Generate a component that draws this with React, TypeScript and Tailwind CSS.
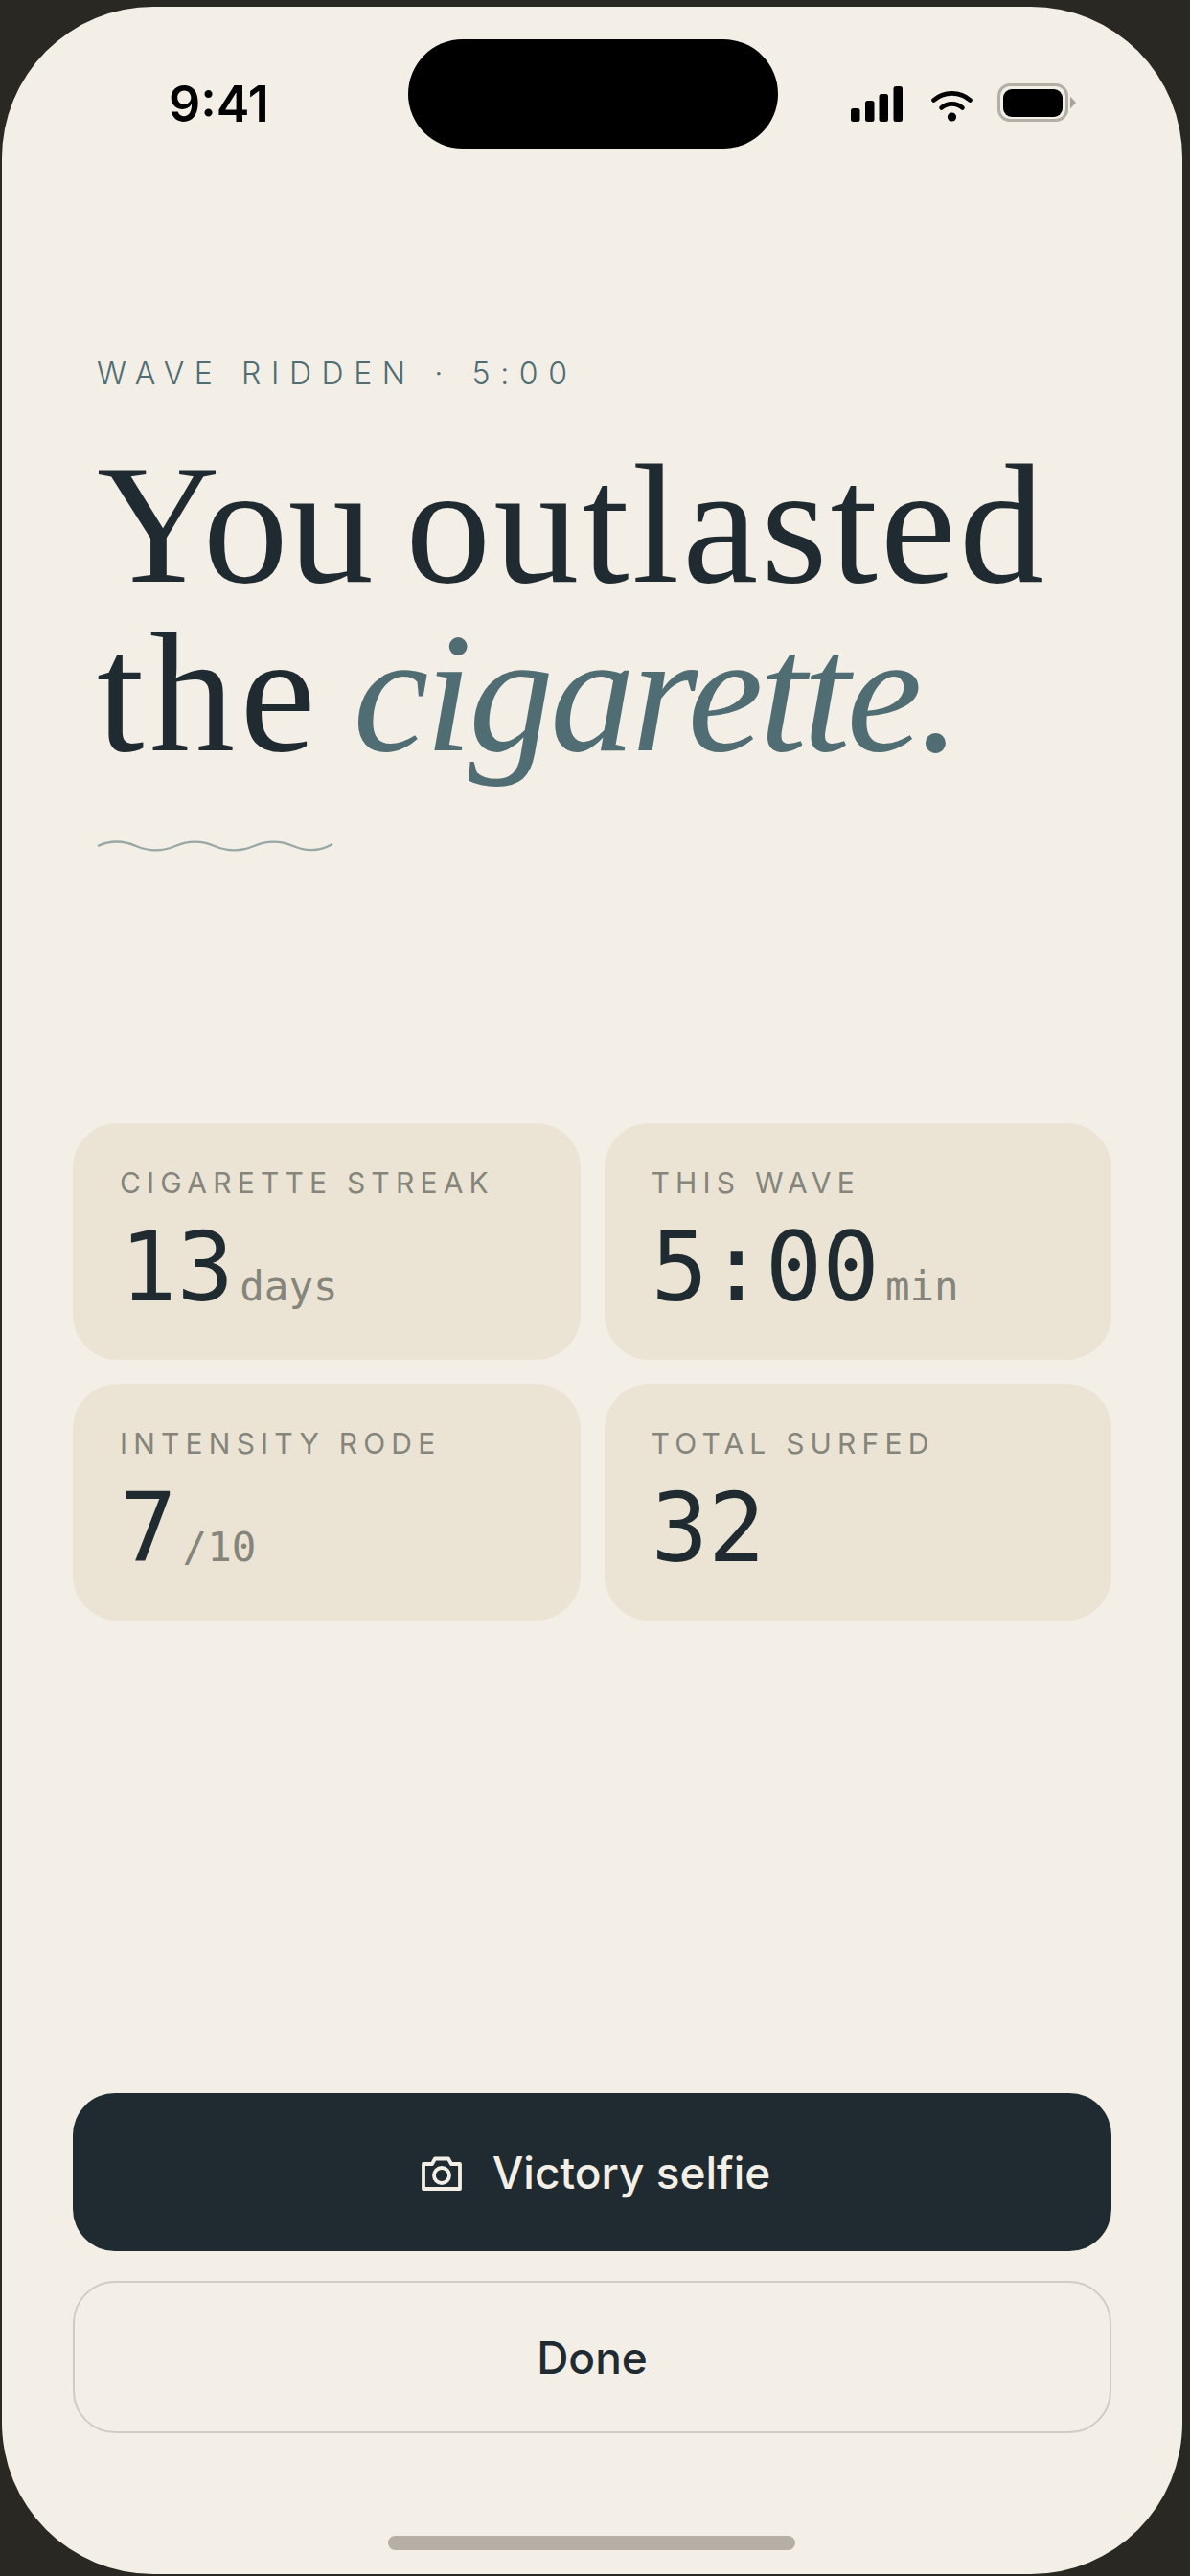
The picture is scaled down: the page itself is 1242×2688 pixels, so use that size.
const serif = "font-['Liberation_Serif',serif]"

function StatusIcons() {
  return (
    <div className="flex items-end">
      <svg width="54" height="37" viewBox="0 0 54 37" fill="#000">
        <rect x="0" y="23" width="9.5" height="14" rx="2.5" />
        <rect x="15" y="15" width="9.5" height="22" rx="2.5" />
        <rect x="29.5" y="8" width="9.5" height="29" rx="2.5" />
        <rect x="44.5" y="0" width="9.5" height="37" rx="2.5" />
      </svg>
      <svg className="ml-[30px]" width="43" height="33" viewBox="0 0 43 33" fill="none" stroke="#000" strokeWidth="4.6" strokeLinecap="round">
        <path d="M2.5 10.5 C13 1 30 1 40.5 10.5" />
        <path d="M10.5 18.5 C16.5 13 26.5 13 32.5 18.5" />
        <circle cx="21.5" cy="28" r="4.6" fill="#000" stroke="none" />
      </svg>
      <div className="ml-[26px] flex items-center">
        <div className="flex h-[40px] w-[74px] items-center justify-center rounded-[13px] border-[3px] border-[#b3afa6]">
          <div className="h-[29px] w-[62px] rounded-[9px] bg-black" />
        </div>
        <div className="ml-[2px] h-[13px] w-[6px] bg-[#a8a49b] [clip-path:polygon(0_0,100%_50%,0_100%)]" />
      </div>
    </div>
  )
}

function Stat({ label, value, unit }: { label: string; value: string; unit?: string }) {
  return (
    <div className="h-[247px] rounded-[47px] bg-[#ebe4d5] pl-[49px] pt-[45px]">
      <div className="font-['Inter',sans-serif] text-[30px] leading-[34px] tracking-[6.2px] text-[#85857b]">{label}</div>
      <div className="mt-[23px] flex items-baseline gap-[6px] font-['DejaVu_Sans_Mono',monospace] leading-[98px]">
        <span className="text-[99px] text-[#1f2b30]">{value}</span>
        {unit && <span className="text-[42.5px] text-[#85857b]">{unit}</span>}
      </div>
    </div>
  )
}

export default function App() {
  return (
    <div className="h-[2688px] w-[1242px] bg-[#2a2822] pl-[2px] pt-[7px]">
      <div className="flex h-[2679px] w-[1232px] flex-col rounded-[158px] bg-[#f3efe7]">
        {/* status bar */}
        <div className="flex h-[148px] items-start pt-[34px]">
          <div className="ml-[174px] mt-[38px] w-[250px] font-['Inter',sans-serif] text-[52px] font-semibold leading-[60px] text-black">9:41</div>
          <div className="h-[114px] w-[386px] rounded-[57px] bg-black" />
          <div className="ml-[76px] mt-[46px]">
            <StatusIcons />
          </div>
        </div>

        {/* headline */}
        <div className="mt-[215px] pl-[99px]">
          <div className="font-['Inter',sans-serif] text-[32px] font-light leading-[40px] tracking-[10.6px] text-[#4f6d72]">WAVE RIDDEN · 5:00</div>
          <h1 className={`${serif} mt-[49px] text-[178px] font-normal leading-[176px] tracking-[3px] text-[#1f2b30] [word-spacing:-14px]`}>
            <span className="tracking-normal">You</span> outlasted
            <br />
            <span className="tracking-[5.5px]">the</span> <em className="italic tracking-[-4px] text-[#4f6d72]">cigarette.</em>
          </h1>
          <svg className="mt-[64px] block" width="247" height="16" viewBox="0 0 247 16" fill="none" stroke="#4f6d72" strokeOpacity="0.55" strokeWidth="2.4">
            <path d="M1 8 C14 2 27 2 41 8 S68 14 82 8 S109 2 123 8 S150 14 164 8 S191 2 205 8 S232 14 246 6" />
          </svg>
        </div>

        {/* stats */}
        <div className="mx-[74px] mt-[281px] grid grid-cols-2 gap-x-[25px] gap-y-[25px]">
          <Stat label="CIGARETTE STREAK" value="13" unit="days" />
          <Stat label="THIS WAVE" value="5:00" unit="min" />
          <Stat label="INTENSITY RODE" value="7" unit="/10" />
          <Stat label="TOTAL SURFED" value="32" />
        </div>

        {/* actions */}
        <div className="mx-[74px] mt-auto flex flex-col gap-[31px]">
          <button className="flex h-[165px] items-center justify-center gap-[32px] rounded-[44px] bg-[#1f2b30] pl-[8px] pt-[2px] font-['Inter',sans-serif] text-[46px] font-medium text-[#f3efe7]">
            <svg width="42" height="36" viewBox="0 0 42 36" fill="none" stroke="#f3efe7" strokeWidth="3.8" strokeLinejoin="round">
              <path d="M2 8 H11 L14 2.5 H28 L31 8 H40 V34 H2 Z" />
              <circle cx="21" cy="20" r="8" />
            </svg>
            Victory selfie
          </button>
          <button className="flex h-[159px] items-center justify-center rounded-[44px] border-2 border-[#d0ccc4] pt-[2px] font-['Inter',sans-serif] text-[46px] font-medium text-[#1f2b30]">
            Done
          </button>
        </div>

        {/* home indicator */}
        <div className="mb-[25px] ml-[403px] mt-[107px] h-[15px] w-[425px] rounded-full bg-[#b5afa6]" />
      </div>
    </div>
  )
}
